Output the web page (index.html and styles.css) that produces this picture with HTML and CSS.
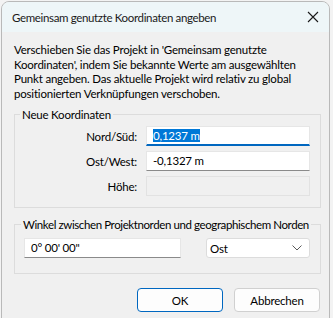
FILE: index.html
```html
<!DOCTYPE html>
<html lang="de">
<head>
  <meta charset="UTF-8" />
  <title>Gemeinsam genutzte Koordinaten angeben</title>
  <link rel="stylesheet" href="styles.css">
</head>
<body>
  <div class="dialog">
    <div class="titlebar">
      <span class="title">Gemeinsam genutzte Koordinaten angeben</span>
      <svg class="close" width="12" height="12" viewBox="0 0 12 12"><path d="M1 1L11 11M11 1L1 11" stroke="#1a1a1a" stroke-width="1.1" fill="none"/></svg>
    </div>
    <div class="content">
      <p class="intro">Verschieben Sie das Projekt in 'Gemeinsam genutzte Koordinaten', indem Sie bekannte Werte am ausgewählten Punkt angeben. Das aktuelle Projekt wird relativ zu global positionierten Verknüpfungen verschoben.</p>

      <fieldset class="group coords">
        <legend>Neue Koordinaten</legend>
        <label>Nord/Süd:</label>
        <div class="field focused"><span class="sel">0,1237 m</span></div>
        <label>Ost/West:</label>
        <div class="field">-0,1327 m</div>
        <label>Höhe:</label>
        <div class="field disabled"></div>
      </fieldset>

      <fieldset class="group angle">
        <legend>Winkel zwischen Projektnorden und geographischem Norden</legend>
        <div class="field angle-input">0° 00' 00"</div>
        <div class="select">
          <span>Ost</span>
          <svg width="10" height="6" viewBox="0 0 10 6"><path d="M0.5 0.5L5 5L9.5 0.5" stroke="#5a5a5a" stroke-width="1" fill="none"/></svg>
        </div>
      </fieldset>

      <div class="buttons">
        <button class="btn default">OK</button>
        <button class="btn">Abbrechen</button>
      </div>
    </div>
  </div>
</body>
</html>
```

FILE: styles.css
```css
body { margin: 0; background: #f3f3f3; font-family: 'Lato', sans-serif; font-size: 11.5px; letter-spacing: -0.2px; color: #000; }
.dialog { margin: 1px 0 0 1px; width: 327px; height: 330px; background: #f0f0f0; border: 1px solid #b9b9b9; border-radius: 8px 8px 0 0; overflow: hidden; }
.titlebar { height: 30px; background: #eef6f8; display: flex; align-items: center; justify-content: space-between; padding: 0 10px 0 10px; }
.title { font-size: 11.5px; letter-spacing: -0.35px; color: #1a1a1a; }
.content { padding: 0 8px 0 12px; }
.intro { margin: 11px 0 0; line-height: 14.5px; padding-right: 10px; }
.group { margin: 6px 0 0; min-width: 0; border: 1px solid #dcdcdc; padding: 4px 10px 11px 0; }
.group legend { padding: 0 2px; margin-left: 5px; line-height: 15px; white-space: nowrap; }
.coords { display: grid; grid-template-columns: 122px 164px; column-gap: 9px; row-gap: 5px; align-items: center; }
.coords label { text-align: right; }
.field { height: 20px; box-sizing: border-box; background: #fff; border: 1px solid #e6e6e6; border-bottom-color: #8a8a8a; padding: 0 6px; line-height: 18px; }
.field.focused { border-bottom: 2px solid #0067c0; }
.field.disabled { background: #f0f0f0; border-color: #e2e2e2; }
.sel { background: #0078d7; color: #fff; }
.angle { display: flex; justify-content: space-between; align-items: center; padding: 6px 10px 15px 0; margin-top: 9px; }
.angle legend { margin-left: 6px; letter-spacing: -0.4px; }
.angle-input { width: 157px; margin-left: 9px; }
.select { width: 104px; height: 20px; box-sizing: border-box; background: #fff; border: 1px solid #dcdcdc; border-radius: 3px; display: flex; align-items: center; justify-content: space-between; padding: 0 7px 0 3px; }
.buttons { display: flex; justify-content: flex-end; gap: 11px; margin-top: 14px; padding-right: 1px; }
.btn { width: 86px; height: 24px; font-family: 'Lato', sans-serif; font-size: 11.5px; letter-spacing: -0.2px; background: #fdfdfd; border: 1px solid #d0d0d0; border-radius: 4px; color: #000; }
.btn.default { border: 1px solid #0067c0; }
```
